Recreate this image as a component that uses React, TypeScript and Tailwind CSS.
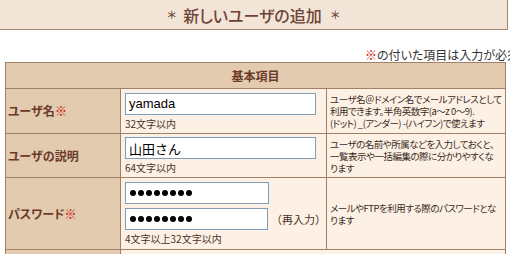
import React from "react";

const jp = "font-['Noto_Sans_CJK_JP',sans-serif]";

function Dots() {
  return (
    <div className="flex items-center gap-[2px] pl-[4px]">
      {Array.from({ length: 8 }).map((_, i) => (
        <span key={i} className="block w-[6px] h-[6px] rounded-full bg-black" />
      ))}
    </div>
  );
}

function TextBox({ value, w, cls }: { value: string; w: string; cls?: string }) {
  return (
    <div
      className={`${w} h-[22px] border border-[#7f9db9] bg-white flex items-center pl-[3px] text-[13px] text-black leading-none ${cls ?? ""}`}
    >
      {value}
    </div>
  );
}

const descCls =
  "border border-[#a08066] bg-[#fdf1e5] pl-[3px] align-middle text-[9.5px] tracking-[-0.5px] leading-[12px] text-[#3a2a24] whitespace-nowrap overflow-hidden [font-feature-settings:'palt']";

export default function App() {
  return (
    <div className={`w-[510px] h-[254px] overflow-hidden bg-white ${jp}`}>
      <div className="w-[508px] h-[30px] bg-[#f2e5d8] border-b border-r border-[#a58670] flex items-center justify-center text-[16px] font-medium text-[#6e4236]">
        <span className="text-[11px] mr-[6px]">＊</span>
        <span className="[font-feature-settings:'palt']">新しいユーザの追加</span>
        <span className="text-[11px] ml-[8px]">＊</span>
      </div>
      <div className="mt-[17px] h-[15px] pl-[365px] whitespace-nowrap text-[12px] leading-[15px] text-[#333] [font-feature-settings:'palt']">
        <span className="text-[#cc0000]">※</span>の付いた項目は入力が必須です
      </div>
      <div className="ml-[5px] w-[500px]">
        <table className="w-[500px] table-fixed border-collapse border border-[#a08066]">
          <colgroup>
            <col className="w-[115px]" />
            <col className="w-[206px]" />
            <col className="w-[179px]" />
          </colgroup>
          <tbody>
            <tr className="h-[26px]">
              <td
                colSpan={3}
                className="border border-[#a08066] bg-[#e3cbaf] text-center text-[12px] font-bold text-[#6b3a2a]"
              >
                基本項目
              </td>
            </tr>
            <tr className="h-[45px]">
              <td className="border border-[#a08066] bg-[#e3cbaf] pl-[2px] text-[12px] font-bold text-[#6b3a2a] align-middle [font-feature-settings:'palt']">
                ユーザ名<span className="text-[#cc0000]">※</span>
              </td>
              <td className="border border-[#a08066] bg-[#fdf1e5] pl-[4px] align-middle">
                <TextBox value="yamada" w="w-[191px]" cls="font-['Liberation_Sans',sans-serif]" />
                <div className="mt-[3px] text-[10px] leading-[12px] text-[#4a3028]">32文字以内</div>
              </td>
              <td className={descCls}>
                ユーザ名＠ドメイン名でメールアドレスとして
                <br />
                利用できます。半角英数字(a～z 0～9).
                <br />
                (ドット) _(アンダー) -(ハイフン)で使えます
              </td>
            </tr>
            <tr className="h-[44px]">
              <td className="border border-[#a08066] bg-[#e3cbaf] pl-[2px] text-[12px] font-bold text-[#6b3a2a] align-middle [font-feature-settings:'palt']">
                ユーザの説明
              </td>
              <td className="border border-[#a08066] bg-[#fdf1e5] pl-[4px] align-middle">
                <TextBox value="山田さん" w="w-[191px]" />
                <div className="mt-[3px] text-[10px] leading-[12px] text-[#4a3028]">64文字以内</div>
              </td>
              <td className={descCls}>
                ユーザの名前や所属などを入力しておくと、
                <br />
                一覧表示や一括編集の際に分かりやすくな
                <br />
                ります
              </td>
            </tr>
            <tr className="h-[72px]">
              <td className="border border-[#a08066] bg-[#e3cbaf] pl-[2px] text-[12px] font-bold text-[#6b3a2a] align-middle [font-feature-settings:'palt']">
                パスワード<span className="text-[#cc0000]">※</span>
              </td>
              <td className="border border-[#a08066] bg-[#fdf1e5] pl-[4px] align-middle">
                <div className="w-[144px] h-[22px] border border-[#7f9db9] bg-white flex items-center">
                  <Dots />
                </div>
                <div className="mt-[4px] flex items-center">
                  <div className="w-[144px] h-[22px] border border-[#7f9db9] bg-white flex items-center">
                    <Dots />
                  </div>
                  <span className="ml-[3px] text-[11px] text-[#4a3028] whitespace-nowrap">（再入力）</span>
                </div>
                <div className="mt-[3px] text-[10px] leading-[12px] text-[#4a3028]">4文字以上32文字以内</div>
              </td>
              <td className={descCls}>
                メールやFTPを利用する際のパスワードとな
                <br />
                ります
              </td>
            </tr>
            <tr className="h-[40px]">
              <td className="border border-[#a08066] bg-[#e3cbaf]" />
              <td colSpan={2} className="border border-[#a08066] bg-[#fdf1e5]" />
            </tr>
          </tbody>
        </table>
      </div>
    </div>
  );
}
